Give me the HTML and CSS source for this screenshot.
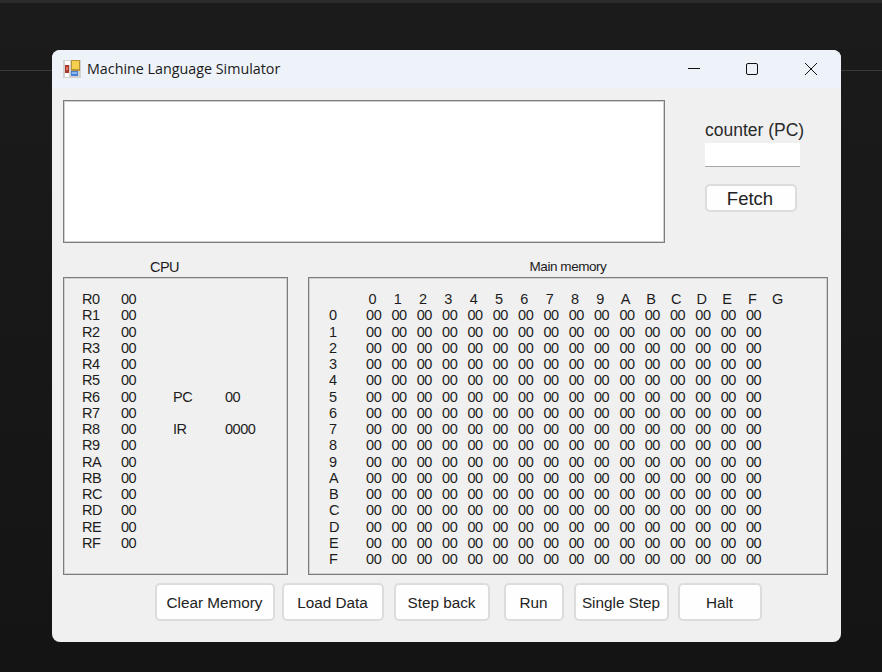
FILE: index.html

```html
<!DOCTYPE html>
<html lang="en">
<head>
  <meta charset="UTF-8" />
  <title>Machine Language Simulator</title>
  <meta name="viewport" content="width=device-width, initial-scale=1.0" />
  <link rel="stylesheet" href="styles.css">
</head>
<body>
  <div class="top-line"></div>
  <div class="mid-line"></div>

  <div class="window">
    <div class="titlebar">
      <svg class="app-icon" width="18" height="18" viewBox="0 0 18 18">
        <rect x="0" y="0" width="18" height="18" fill="#d2d2d2"/>
        <rect x="2" y="1" width="5" height="4" fill="#fff"/>
        <rect x="2" y="13" width="4" height="4" fill="#fff"/>
        <rect x="8" y="0" width="9" height="11" fill="#b8923a"/>
        <rect x="9" y="1" width="7" height="8" fill="#f6cf4e"/>
        <rect x="2" y="5" width="4" height="8" fill="#a83a32"/>
        <rect x="3" y="7" width="2" height="3" fill="#e8705f"/>
        <rect x="8" y="11" width="7" height="5" fill="#4a80d4"/>
        <rect x="9" y="12" width="5" height="2" fill="#8ab8ee"/>
      </svg>
      <span class="app-title">Machine Language Simulator</span>
      <div class="win-controls">
        <svg class="min-icon" width="12" height="12" viewBox="0 0 12 12"><path d="M0 5.5H12" stroke="#111" stroke-width="1" fill="none"/></svg>
        <svg width="12" height="12" viewBox="0 0 12 12"><rect x="0.5" y="0.5" width="11" height="11" rx="1.5" stroke="#111" stroke-width="1" fill="none"/></svg>
        <svg width="12" height="12" viewBox="0 0 12 12"><path d="M0 0L12 12M12 0L0 12" stroke="#111" stroke-width="1" fill="none"/></svg>
      </div>
    </div>

    <div class="content">
      <div class="top-row">
        <div class="editor"></div>
        <div class="side">
          <label class="counter-label">counter (PC)</label>
          <div class="counter-input"></div>
          <button type="button" class="btn fetch-btn">Fetch</button>
        </div>
      </div>

      <div class="panels">
        <div class="cpu-col">
          <div class="panel-title cpu-title">CPU</div>
          <div class="panel cpu-panel">
            <div class="cpu-grid">
              <span>R0</span><span>00</span><span></span><span></span>
              <span>R1</span><span>00</span><span></span><span></span>
              <span>R2</span><span>00</span><span></span><span></span>
              <span>R3</span><span>00</span><span></span><span></span>
              <span>R4</span><span>00</span><span></span><span></span>
              <span>R5</span><span>00</span><span></span><span></span>
              <span>R6</span><span>00</span><span>PC</span><span>00</span>
              <span>R7</span><span>00</span><span></span><span></span>
              <span>R8</span><span>00</span><span>IR</span><span>0000</span>
              <span>R9</span><span>00</span><span></span><span></span>
              <span>RA</span><span>00</span><span></span><span></span>
              <span>RB</span><span>00</span><span></span><span></span>
              <span>RC</span><span>00</span><span></span><span></span>
              <span>RD</span><span>00</span><span></span><span></span>
              <span>RE</span><span>00</span><span></span><span></span>
              <span>RF</span><span>00</span><span></span><span></span>
            </div>
          </div>
        </div>

        <div class="mem-col">
          <div class="panel-title mem-title">Main memory</div>
          <div class="panel mem-panel">
            <div class="mem-grid">
              <span></span><span>0</span><span>1</span><span>2</span><span>3</span><span>4</span><span>5</span><span>6</span><span>7</span><span>8</span><span>9</span><span>A</span><span>B</span><span>C</span><span>D</span><span>E</span><span>F</span><span>G</span>
              <span>0</span><span>00</span><span>00</span><span>00</span><span>00</span><span>00</span><span>00</span><span>00</span><span>00</span><span>00</span><span>00</span><span>00</span><span>00</span><span>00</span><span>00</span><span>00</span><span>00</span><span></span>
              <span>1</span><span>00</span><span>00</span><span>00</span><span>00</span><span>00</span><span>00</span><span>00</span><span>00</span><span>00</span><span>00</span><span>00</span><span>00</span><span>00</span><span>00</span><span>00</span><span>00</span><span></span>
              <span>2</span><span>00</span><span>00</span><span>00</span><span>00</span><span>00</span><span>00</span><span>00</span><span>00</span><span>00</span><span>00</span><span>00</span><span>00</span><span>00</span><span>00</span><span>00</span><span>00</span><span></span>
              <span>3</span><span>00</span><span>00</span><span>00</span><span>00</span><span>00</span><span>00</span><span>00</span><span>00</span><span>00</span><span>00</span><span>00</span><span>00</span><span>00</span><span>00</span><span>00</span><span>00</span><span></span>
              <span>4</span><span>00</span><span>00</span><span>00</span><span>00</span><span>00</span><span>00</span><span>00</span><span>00</span><span>00</span><span>00</span><span>00</span><span>00</span><span>00</span><span>00</span><span>00</span><span>00</span><span></span>
              <span>5</span><span>00</span><span>00</span><span>00</span><span>00</span><span>00</span><span>00</span><span>00</span><span>00</span><span>00</span><span>00</span><span>00</span><span>00</span><span>00</span><span>00</span><span>00</span><span>00</span><span></span>
              <span>6</span><span>00</span><span>00</span><span>00</span><span>00</span><span>00</span><span>00</span><span>00</span><span>00</span><span>00</span><span>00</span><span>00</span><span>00</span><span>00</span><span>00</span><span>00</span><span>00</span><span></span>
              <span>7</span><span>00</span><span>00</span><span>00</span><span>00</span><span>00</span><span>00</span><span>00</span><span>00</span><span>00</span><span>00</span><span>00</span><span>00</span><span>00</span><span>00</span><span>00</span><span>00</span><span></span>
              <span>8</span><span>00</span><span>00</span><span>00</span><span>00</span><span>00</span><span>00</span><span>00</span><span>00</span><span>00</span><span>00</span><span>00</span><span>00</span><span>00</span><span>00</span><span>00</span><span>00</span><span></span>
              <span>9</span><span>00</span><span>00</span><span>00</span><span>00</span><span>00</span><span>00</span><span>00</span><span>00</span><span>00</span><span>00</span><span>00</span><span>00</span><span>00</span><span>00</span><span>00</span><span>00</span><span></span>
              <span>A</span><span>00</span><span>00</span><span>00</span><span>00</span><span>00</span><span>00</span><span>00</span><span>00</span><span>00</span><span>00</span><span>00</span><span>00</span><span>00</span><span>00</span><span>00</span><span>00</span><span></span>
              <span>B</span><span>00</span><span>00</span><span>00</span><span>00</span><span>00</span><span>00</span><span>00</span><span>00</span><span>00</span><span>00</span><span>00</span><span>00</span><span>00</span><span>00</span><span>00</span><span>00</span><span></span>
              <span>C</span><span>00</span><span>00</span><span>00</span><span>00</span><span>00</span><span>00</span><span>00</span><span>00</span><span>00</span><span>00</span><span>00</span><span>00</span><span>00</span><span>00</span><span>00</span><span>00</span><span></span>
              <span>D</span><span>00</span><span>00</span><span>00</span><span>00</span><span>00</span><span>00</span><span>00</span><span>00</span><span>00</span><span>00</span><span>00</span><span>00</span><span>00</span><span>00</span><span>00</span><span>00</span><span></span>
              <span>E</span><span>00</span><span>00</span><span>00</span><span>00</span><span>00</span><span>00</span><span>00</span><span>00</span><span>00</span><span>00</span><span>00</span><span>00</span><span>00</span><span>00</span><span>00</span><span>00</span><span></span>
              <span>F</span><span>00</span><span>00</span><span>00</span><span>00</span><span>00</span><span>00</span><span>00</span><span>00</span><span>00</span><span>00</span><span>00</span><span>00</span><span>00</span><span>00</span><span>00</span><span>00</span><span></span>
            </div>
          </div>
        </div>
      </div>

      <div class="actions">
        <button type="button" class="btn btn-clear">Clear Memory</button>
        <button type="button" class="btn btn-load">Load Data</button>
        <button type="button" class="btn btn-back">Step back</button>
        <button type="button" class="btn btn-run">Run</button>
        <button type="button" class="btn btn-step">Single Step</button>
        <button type="button" class="btn btn-halt">Halt</button>
      </div>
    </div>
  </div>
</body>
</html>
```

FILE: styles.css

```css
* {
  box-sizing: border-box;
}
html, body {
  height: 100%;
}
body {
  margin: 0;
  padding: 50px 41px 30px 52px;
  overflow: hidden;
  font-family: "Liberation Sans", Arial, sans-serif;
  color: #1c1c1c;
  background: linear-gradient(#1b1b1b, #141414);
}
.top-line {
  position: absolute;
  top: 0;
  left: 0;
  right: 0;
  height: 3px;
  background: #2b2b2b;
}
.mid-line {
  position: absolute;
  top: 70px;
  left: 0;
  right: 0;
  height: 1px;
  background: #3a3a3a;
}
.window {
  position: relative;
  width: 789px;
  height: 592px;
  background: #f0f0f0;
  border-radius: 8px;
  overflow: hidden;
}
.titlebar {
  display: flex;
  align-items: center;
  height: 38px;
  padding-left: 11px;
  background: #eef2f9;
}
.app-icon {
  margin-right: 6px;
}
.app-title {
  position: relative;
  top: -1px;
  font-family: "Open Sans", sans-serif;
  font-size: 14.3px;
  color: #1a1a1a;
}
.win-controls {
  display: flex;
  gap: 47px;
  margin-left: auto;
  padding-right: 24px;
}
.min-icon {
  margin-right: -1px;
}
.content {
  padding: 12px 13px 0 11px;
}
.top-row {
  display: flex;
  height: 143px;
}
.editor {
  width: 602px;
  height: 143px;
  background: #fff;
  border: 1px solid #7c7c7c;
  box-shadow: inset 0 0 0 1px #d0d0d0;
}
.side {
  display: flex;
  flex-direction: column;
  align-items: flex-start;
  margin-left: 40px;
  padding-top: 20px;
}
.counter-label {
  font-size: 17.5px;
  line-height: 20px;
  color: #2a2a2a;
}
.counter-input {
  width: 95px;
  height: 24px;
  margin-top: 3px;
  background: #fff;
  border-bottom: 1px solid #a8a8a8;
}
.btn {
  padding: 2px 1px 0 0;
  font-family: "Liberation Sans", Arial, sans-serif;
  font-size: 15.3px;
  color: #222;
  background: #fefefe;
  border: 2px solid #dcdcdc;
  border-radius: 5px;
}
.fetch-btn {
  width: 92px;
  height: 28px;
  margin-top: 17px;
  padding-right: 2px;
  font-size: 18.5px;
}
.panels {
  display: flex;
  gap: 20px;
}
.cpu-col {
  width: 225px;
}
.mem-col {
  width: 520px;
}
.panel-title {
  height: 34px;
  padding-top: 15px;
  font-size: 14.5px;
  line-height: 18px;
  letter-spacing: -0.5px;
  text-align: center;
}
.cpu-title {
  padding-right: 22px;
}
.mem-title {
  font-size: 13.5px;
  letter-spacing: -0.45px;
}
.panel {
  height: 298px;
  border: 1px solid #7c7c7c;
  box-shadow: inset 0 0 0 1px #d0d0d0;
}
.cpu-panel {
  padding: 13px 0 0 18px;
}
.cpu-grid {
  display: grid;
  grid-template-columns: 39px 52px 52px 50px;
  grid-auto-rows: 16.25px;
  font-size: 14.5px;
  line-height: 16.25px;
  letter-spacing: -0.5px;
}
.mem-panel {
  padding: 13px 0 0 12px;
}
.mem-grid {
  display: grid;
  grid-template-columns: 40px repeat(17, 25.33px);
  grid-auto-rows: 16.25px;
  font-size: 14.5px;
  line-height: 16.25px;
  letter-spacing: -0.5px;
  text-align: center;
}
.mem-grid span:nth-child(18n+1) {
  padding-left: 8px;
  text-align: left;
}
.mem-grid span:nth-child(-n+18) {
  padding-right: 3px;
}
.actions {
  display: flex;
  margin-top: 8px;
  padding-left: 92px;
}
.actions .btn {
  height: 38px;
}
.btn-clear {
  width: 120px;
}
.btn-load {
  width: 102px;
  margin-left: 7px;
}
.btn-back {
  width: 96px;
  margin-left: 10px;
}
.btn-run {
  width: 60px;
  margin-left: 14px;
}
.btn-step {
  width: 95px;
  margin-left: 10px;
}
.btn-halt {
  width: 84px;
  margin-left: 9px;
}
```
